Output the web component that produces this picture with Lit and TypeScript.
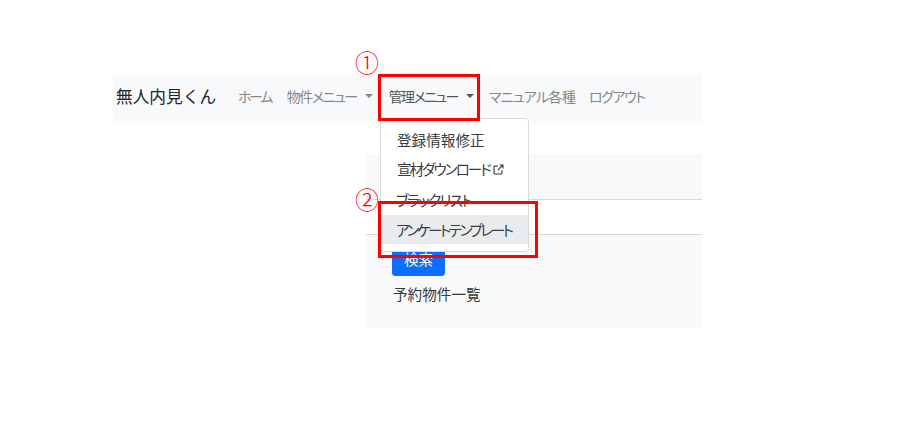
import { LitElement, html, css } from "lit";
import { customElement } from "lit/decorators.js";

@customElement("app-root")
export class AppRoot extends LitElement {
  static styles = css`
    :host {
      display: block;
      position: relative;
      width: 901px;
      height: 433px;
      background: #fff;
      overflow: hidden;
      font-family: "Noto Sans CJK JP", "Noto Sans", sans-serif;
      font-feature-settings: "palt";
      font-size: 14.6px;
      line-height: 22px;
      color: #212529;
    }
    .page {
      display: flex;
      flex-direction: column;
      width: 589px;
      margin-left: 113px;
      padding-top: 75px;
    }
    .nav {
      display: flex;
      align-items: center;
      height: 48px;
      background: #f8f9fa;
      padding: 0 0 7px 3px;
      box-sizing: border-box;
    }
    .brand {
      font-size: 16.7px;
      font-feature-settings: normal;
      width: 122px;
      flex: none;
      white-space: nowrap;
    }
    .links {
      display: flex;
      align-items: center;
      color: #85888b;
      font-size: 14px;
      white-space: nowrap;
    }
    .link { margin-right: 15px; display: flex; align-items: center; }
    .link.active { color: #55585b; }
    .s-home { letter-spacing: -2.4px; margin-right: 16px; }
    .s-prop { letter-spacing: -1.5px; margin-right: 16px; }
    .s-admin { letter-spacing: -1.6px; margin-right: 15px; }
    .s-manual { letter-spacing: -0.7px; margin-right: 14px; }
    .s-logout { letter-spacing: -1.4px; }
    .caret {
      display: inline-block;
      width: 0;
      height: 0;
      margin-left: 8px;
      border-top: 4.5px solid currentColor;
      border-left: 4.5px solid transparent;
      border-right: 4.5px solid transparent;
    }
    .panel {
      margin: 31px 0 0 253px;
      height: 174px;
      background: #f8f9fa;
      display: flex;
      flex-direction: column;
    }
    .panel-head { height: 45px; flex: none; border-bottom: 1px solid #d6d8db; }
    .panel-input { height: 34px; flex: none; background: #fff; border-bottom: 1px solid #d6d8db; }
    .panel-body { padding: 8px 0 0 26px; display: flex; flex-direction: column; align-items: flex-start; }
    .btn {
      width: 53px;
      height: 33px;
      box-sizing: border-box;
      padding-bottom: 2px;
      background: #0d6efd;
      color: #fff;
      border-radius: 3.5px;
      display: flex;
      align-items: center;
      justify-content: center;
    }
    .caption { margin: 7px 0 0 1px; color: #35383b; }
    .menu {
      position: absolute;
      left: 380px;
      top: 118px;
      width: 149px;
      height: 134px;
      box-sizing: border-box;
      background: #fff;
      border: 1px solid #d9dadb;
      border-radius: 3.5px;
      padding: 7px 0;
      display: flex;
      flex-direction: column;
      color: #3a3d40;
    }
    .item {
      height: 29.5px;
      box-sizing: border-box;
      flex: none;
      display: flex;
      align-items: center;
      padding-left: 16px;
      white-space: nowrap;
    }
    .s-reg, .s-dl { padding-bottom: 2px; }
    .item.hover { background: #e9ecef; padding-left: 15px; padding-top: 1px; letter-spacing: -2.5px; }
    .s-dl { letter-spacing: -2px; }
    .s-black { letter-spacing: -1.6px; padding-left: 15px; }
    .s-dl svg { margin-left: 3px; }
    .mark {
      position: absolute;
      box-sizing: border-box;
      border: 3px solid #f00;
    }
    .m1 { left: 378px; top: 74px; width: 102px; height: 47px; }
    .m2 { left: 378px; top: 201px; width: 160px; height: 57px; }
    .num {
      position: absolute;
      color: #f00;
      font-size: 24px;
      font-weight: 300;
      line-height: 24px;
      width: 24px;
      text-align: center;
      font-feature-settings: normal;
    }
    .n1 { left: 355px; top: 50px; }
    .n2 { left: 355px; top: 187px; }
  `;

  render() {
    return html`
      <div class="page">
        <nav class="nav">
          <div class="brand">無人内見くん</div>
          <div class="links">
            <span class="link s-home">ホーム</span>
            <span class="link s-prop">物件メニュー<i class="caret"></i></span>
            <span class="link active s-admin">管理メニュー<i class="caret"></i></span>
            <span class="link s-manual">マニュアル各種</span>
            <span class="link s-logout">ログアウト</span>
          </div>
        </nav>
        <section class="panel">
          <div class="panel-head"></div>
          <div class="panel-input"></div>
          <div class="panel-body">
            <div class="btn">検索</div>
            <div class="caption">予約物件一覧</div>
          </div>
        </section>
      </div>
      <div class="menu">
        <div class="item s-reg">登録情報修正</div>
        <div class="item s-dl">宣材ダウンロード<svg width="11" height="11" viewBox="0 0 16 16" fill="none" stroke="#3a3d40" stroke-width="1.7"><path d="M7 3H2.500a1 1 0 0 0-1 1v9.500a1 1 0 0 0 1 1H12a1 1 0 0 0 1-1V9"/><path d="M9.500 1.500h5v5M14.500 1.500 7 9"/></svg></div>
        <div class="item s-black">ブラックリスト</div>
        <div class="item hover">アンケートテンプレート</div>
      </div>
      <div class="mark m1"></div>
      <div class="mark m2"></div>
      <div class="num n1">①</div>
      <div class="num n2">②</div>
    `;
  }
}
